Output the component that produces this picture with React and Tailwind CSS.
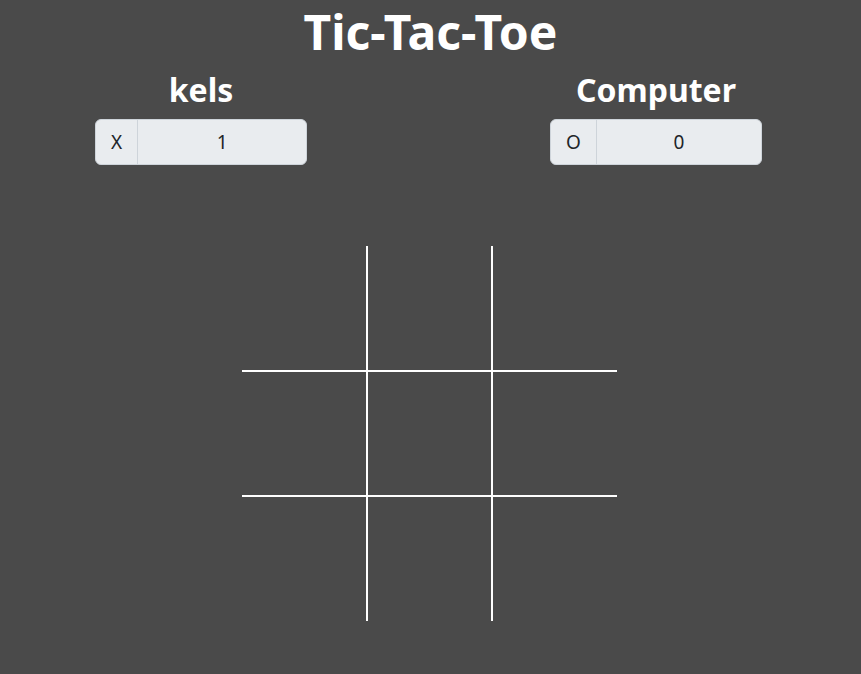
// Tic-Tac-Toe — scoreboard + empty board
const PLAYERS = [
  { name: 'kels', mark: 'X', score: 1 },
  { name: 'Computer', mark: 'O', score: 0 },
];

const ScoreBox = ({ name, mark, score }) => (
  <div className="flex flex-col items-center w-[212px]">
    <h2 className="text-[32px] font-bold leading-[1.2] text-white mb-[10px]">{name}</h2>
    <div className="flex w-full h-[46px] rounded-[6px] border border-[#ced4da] bg-[#e9ecef] text-[19px] text-[#212529] overflow-hidden">
      <span className="flex items-center px-[15px] border-r border-[#ced4da]">{mark}</span>
      <span className="flex-1 flex items-center justify-center">{score}</span>
    </div>
  </div>
);

export default function App() {
  const cells = [...Array(9)];
  return (
    <div className="min-h-[674px] bg-[#4a4a4a] font-['Noto_Sans',sans-serif] flex flex-col items-center pt-[3px]">
      <h1 className="text-[48px] font-bold leading-[1.2] text-white">Tic-Tac-Toe</h1>

      <div className="flex justify-between w-[667px] mt-[10px] -translate-x-[2px]">
        {PLAYERS.map(p => <ScoreBox key={p.name} {...p} />)}
      </div>

      {/* Board — white gaps form the grid lines */}
      <div className="mt-[81px] grid grid-cols-[124px_123px_124px] grid-rows-[124px_123px_124px] gap-[2px] bg-white -translate-x-[1px]">
        {cells.map((_, i) => (
          <div key={i} className="bg-[#4a4a4a]" />
        ))}
      </div>
    </div>
  );
}
